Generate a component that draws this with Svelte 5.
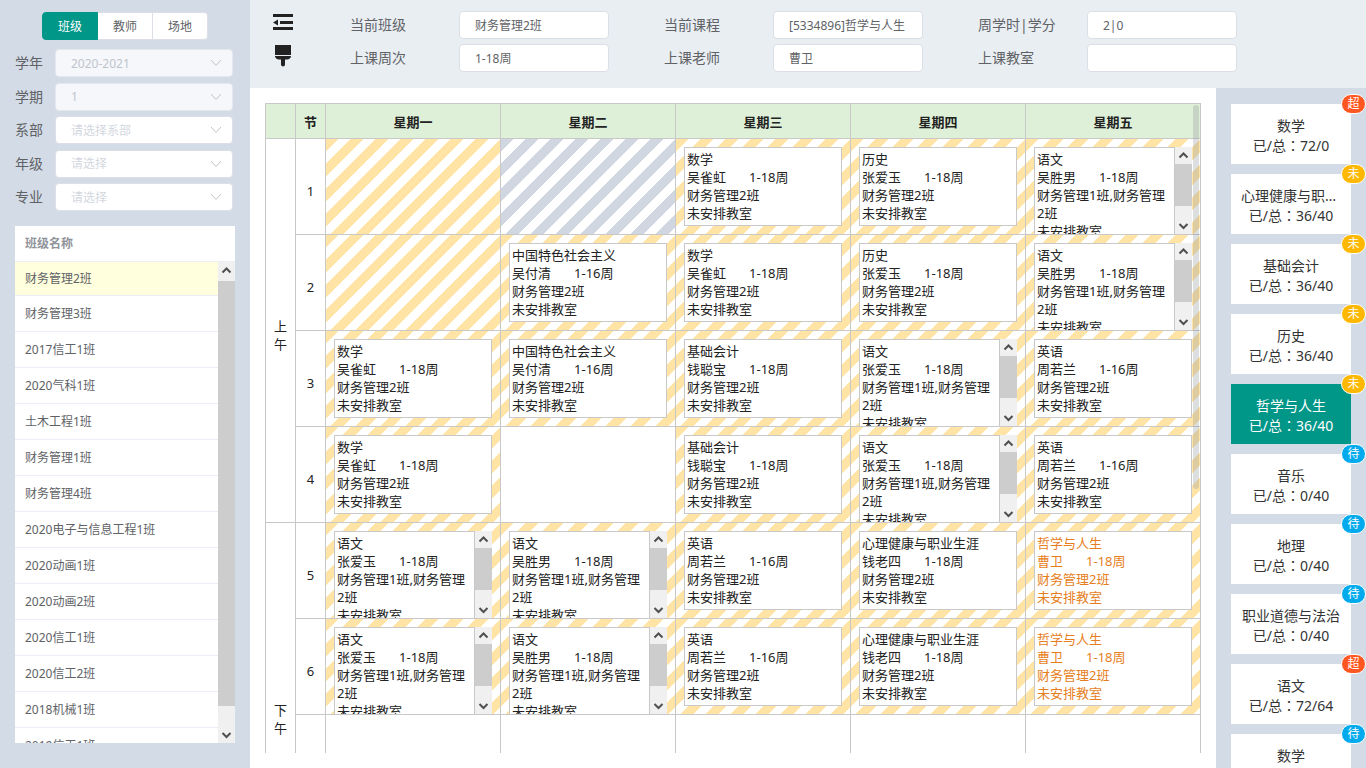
<script lang="ts">
	type Lesson = { course: string; teacher: string; weeks: string; classes: string };
	type Cell = { kind: 'blocked' | 'taken' | 'free' | 'lesson'; lesson?: Lesson; current?: boolean };

	const tabs = ['班级', '教师', '场地'];
	let tab = $state('班级');

	const filters = [
		{ id: 'year', label: '学年', text: '2020-2021', disabled: true },
		{ id: 'term', label: '学期', text: '1', disabled: true },
		{ id: 'dept', label: '系部', text: '请选择系部', disabled: false },
		{ id: 'grade', label: '年级', text: '请选择', disabled: false },
		{ id: 'major', label: '专业', text: '请选择', disabled: false }
	];

	const classNames = [
		'财务管理2班', '财务管理3班', '2017信工1班', '2020气科1班', '土木工程1班',
		'财务管理1班', '财务管理4班', '2020电子与信息工程1班', '2020动画1班', '2020动画2班',
		'2020信工1班', '2020信工2班', '2018机械1班', '2019信工1班'
	];
	let selectedClass = $state('财务管理2班');

	const info = [
		{ id: 'class', label: '当前班级', value: '财务管理2班' },
		{ id: 'course', label: '当前课程', value: '[5334896]哲学与人生' },
		{ id: 'hours', label: '周学时|学分', value: '2|0' },
		{ id: 'weeks', label: '上课周次', value: '1-18周' },
		{ id: 'teacher', label: '上课老师', value: '曹卫' },
		{ id: 'room', label: '上课教室', value: '' }
	];

	const days = ['星期一', '星期二', '星期三', '星期四', '星期五'];

	const one = '财务管理2班';
	const both = '财务管理1班,财务管理2班';
	function lesson(course: string, teacher: string, weeks = '1-18周', classes = one): Cell {
		return { kind: 'lesson', lesson: { course, teacher, weeks, classes }, current: course === '哲学与人生' };
	}
	const taken: Cell = { kind: 'taken' };
	const blocked: Cell = { kind: 'blocked' };
	const free: Cell = { kind: 'free' };
	const math = lesson('数学', '吴雀虹');
	const history = lesson('历史', '张爱玉');
	const socialism = lesson('中国特色社会主义', '吴付清', '1-16周');
	const accounting = lesson('基础会计', '钱聪宝');
	const english = lesson('英语', '周若兰', '1-16周');
	const mental = lesson('心理健康与职业生涯', '钱老四');
	const philosophy = lesson('哲学与人生', '曹卫');
	const chineseWu = lesson('语文', '吴胜男', '1-18周', both);
	const chineseZhang = lesson('语文', '张爱玉', '1-18周', both);

	const periods: Cell[][] = [
		[taken, blocked, math, history, chineseWu],
		[taken, socialism, math, history, chineseWu],
		[math, socialism, accounting, chineseZhang, english],
		[math, free, accounting, chineseZhang, english],
		[chineseZhang, chineseWu, english, mental, philosophy],
		[chineseZhang, chineseWu, english, mental, philosophy],
		[free, free, free, free, free],
		[free, free, free, free, free]
	];

	const courses = [
		{ name: '数学', hours: '72/0', state: '超' },
		{ name: '心理健康与职业生涯', hours: '36/40', state: '未' },
		{ name: '基础会计', hours: '36/40', state: '未' },
		{ name: '历史', hours: '36/40', state: '未' },
		{ name: '哲学与人生', hours: '36/40', state: '未' },
		{ name: '音乐', hours: '0/40', state: '待' },
		{ name: '地理', hours: '0/40', state: '待' },
		{ name: '职业道德与法治', hours: '0/40', state: '待' },
		{ name: '语文', hours: '72/64', state: '超' },
		{ name: '数学', hours: '0/40', state: '待' }
	];
	let activeCourse = $state(4);
</script>

{#snippet scrollbar(before: number, size: number)}
	<div class="bar" aria-hidden="true">
		<svg class="arrow" viewBox="0 0 17 17"><path d="M4.5 10.5 8.5 6.5 12.5 10.5" /></svg>
		<div class="track">
			<div class="thumb" style="margin-top: {before}px; height: {size}%"></div>
		</div>
		<svg class="arrow" viewBox="0 0 17 17"><path d="M4.5 7 8.5 11 12.5 7" /></svg>
	</div>
{/snippet}

<div class="page">
	<aside class="sidebar">
		<div class="tabs">
			{#each tabs as t}
				<label class:active={tab === t}>
					<input type="radio" name="tab" value={t} bind:group={tab} />
					{t}
				</label>
			{/each}
		</div>

		<div class="filters">
			{#each filters as f}
				<div class="filter">
					<label for={f.id}>{f.label}</label>
					<div class="select">
						<select id={f.id} disabled={f.disabled}>
							<option>{f.text}</option>
						</select>
						<svg viewBox="0 0 12 8"><path d="M1 1 6 6.5 11 1" /></svg>
					</div>
				</div>
			{/each}
		</div>

		<div class="class-list">
			<div class="list-title">班级名称</div>
			<div class="list-body">
				<div class="rows">
					{#each classNames as name}
						<button type="button" class:selected={selectedClass === name} onclick={() => (selectedClass = name)}>{name}</button>
					{/each}
				</div>
				{@render scrollbar(2, 95)}
			</div>
		</div>
	</aside>

	<div class="content">
		<header>
			<div class="tools">
				<button type="button" aria-label="收起">
					<svg viewBox="0 0 20 18">
						<path d="M0 1h20v3H0zM7 8h13v3H7zM0 14h20v3H0zM0 9.5 5 6.5v6z" />
					</svg>
				</button>
				<button type="button" aria-label="清除">
					<svg viewBox="0 0 20 22">
						<path d="M2 0h16v10H2zM2 11h16c0 2-2 3.500-4 3.500h-2v5c0 2.500-4 2.500-4 0v-5H6c-2 0-4-1.500-4-3.500z" />
					</svg>
				</button>
			</div>
			<div class="info">
				{#each info as i}
					<div class="field">
						<label for={i.id}>{i.label}</label>
						<input id={i.id} type="text" value={i.value} readonly />
					</div>
				{/each}
			</div>
		</header>

		<div class="body">
			<main>
				<div class="timetable">
					<table>
						<thead>
							<tr>
								<th class="narrow"></th>
								<th class="narrow">节</th>
								{#each days as day}
									<th>{day}</th>
								{/each}
							</tr>
						</thead>
						<tbody>
							{#each periods as row, i}
								<tr>
									{#if i % 4 === 0}
										<td class="half" rowspan="4">{i === 0 ? '上' : '下'}<br />午</td>
									{/if}
									<td class="period">{i + 1}</td>
									{#each row as cell}
										<td>
											<div class="cell {cell.kind}">
												{#if cell.lesson}
													{@const l = cell.lesson}
													<div class="lesson-box">
														<div class="card" class:current={cell.current}>
															<div>{l.course}</div>
															<div>{l.teacher}<span class="weeks">{l.weeks}</span></div>
															<div>{l.classes}</div>
															<div>未安排教室</div>
														</div>
														{#if l.classes === both}
															{@render scrollbar(0, 79)}
														{/if}
													</div>
												{/if}
											</div>
										</td>
									{/each}
								</tr>
							{/each}
						</tbody>
					</table>
					<div class="float-thumb"></div>
				</div>
			</main>

			<aside class="courses">
				{#each courses as c, i}
					<button type="button" class="course" class:active={activeCourse === i} onclick={() => (activeCourse = i)}>
						<span class="name">{c.name}</span>
						<span>已/总<span class="colon">：</span>{c.hours}</span>
						<span class="badge" class:over={c.state === '超'} class:todo={c.state === '待'}>{c.state}</span>
					</button>
				{/each}
			</aside>
		</div>
	</div>
</div>

<style>
	:global(body) {
		font-family: 'Noto Sans', 'Noto Sans CJK SC', sans-serif;
		font-size: 14px;
		color: #222;
	}
	.page, .page * {
		box-sizing: border-box;
	}
	button, input, select {
		font-family: inherit;
		margin: 0;
	}
	button {
		border: none;
		padding: 0;
		cursor: pointer;
	}
	.page {
		display: flex;
		height: 100vh;
		overflow: hidden;
	}

	/* left column */
	.sidebar {
		display: flex;
		flex-direction: column;
		flex: none;
		width: 250px;
		padding: 12px 15px 25px;
		background: #d3dce6;
		color: #606266;
	}
	.tabs {
		display: flex;
		align-self: center;
		font-size: 12px;
	}
	.tabs label {
		height: 28px;
		padding: 0 15px;
		border: 1px solid #dcdfe6;
		border-left: none;
		background: #fff;
		line-height: 28px;
		cursor: pointer;
	}
	.tabs label:first-child {
		border-left: 1px solid #dcdfe6;
		border-radius: 4px 0 0 4px;
	}
	.tabs label:last-child {
		border-radius: 0 4px 4px 0;
	}
	.tabs label.active {
		background: #009688;
		border-color: #009688;
		color: #fff;
	}
	.tabs input {
		position: absolute;
		opacity: 0;
		pointer-events: none;
	}
	.filters {
		display: flex;
		flex-direction: column;
		justify-content: space-between;
		flex: none;
		height: 162px;
		margin-top: 9px;
	}
	.filter {
		display: flex;
		align-items: center;
	}
	.filter label {
		width: 40px;
		line-height: 28px;
	}
	.select {
		display: grid;
		width: 178px;
	}
	.select select {
		grid-area: 1 / 1;
		height: 28px;
		padding: 0 15px;
		appearance: none;
		background: #fff;
		border: 1px solid #dcdfe6;
		border-radius: 4px;
		color: #d3d7de;
		font-size: 12px;
	}
	.select select:disabled {
		background: #f5f7fa;
		border-color: #e4e7ed;
		color: #c0c4cc;
		opacity: 1;
	}
	.select svg {
		grid-area: 1 / 1;
		place-self: center end;
		width: 12px;
		height: 8px;
		margin-right: 11px;
		fill: none;
		stroke: #c0c4cc;
		pointer-events: none;
	}
	.class-list {
		display: flex;
		flex-direction: column;
		flex: 1;
		min-height: 0;
		margin-top: 15px;
		background: #fff;
		font-size: 12px;
	}
	.list-title {
		flex: none;
		height: 36px;
		padding: 0 10px;
		border-bottom: 1px solid #ebeef5;
		color: #909399;
		font-weight: bold;
		line-height: 35px;
	}
	.list-body {
		display: flex;
		flex: 1;
		min-height: 0;
	}
	.rows {
		flex: 1;
		overflow: hidden;
	}
	.rows button {
		display: block;
		width: 100%;
		height: 36px;
		padding: 0 10px 2px;
		background: #fff;
		border-bottom: 1px solid #ebeef5;
		color: #606266;
		font-size: 12px;
		text-align: left;
	}
	.rows button:first-child {
		height: 34px;
	}
	.rows button.selected {
		background: #ffffdd;
	}

	/* scroll bars */
	.bar {
		display: flex;
		flex-direction: column;
		flex: none;
		width: 17px;
		background: #f0f0f0;
	}
	.arrow {
		flex: none;
		width: 17px;
		height: 17px;
		fill: none;
		stroke: #505050;
		stroke-width: 2;
	}
	.track {
		flex: 1;
		min-height: 0;
	}
	.thumb {
		background: #cdcdcd;
	}

	/* top */
	.content {
		display: flex;
		flex-direction: column;
		flex: 1;
		min-width: 0;
	}
	header {
		display: flex;
		flex: none;
		height: 88px;
		padding: 11px 74px 0 23px;
		background: #e9eef3;
		color: #606266;
	}
	.tools {
		display: flex;
		flex-direction: column;
		gap: 12px;
		flex: none;
		width: 77px;
		padding-top: 2px;
	}
	.tools button {
		display: flex;
		width: 22px;
		height: 20px;
		background: none;
	}
	.tools svg {
		width: 20px;
		height: 22px;
		fill: #222;
	}
	.tools button:first-child svg {
		height: 18px;
	}
	.info {
		display: grid;
		grid-template-columns: repeat(3, 1fr);
		grid-auto-rows: 28px;
		row-gap: 5px;
		flex: 1;
	}
	.field {
		display: flex;
		align-items: center;
	}
	.field label {
		width: 109px;
		line-height: 28px;
	}
	.field input {
		width: 150px;
		height: 28px;
		padding: 0 15px;
		background: #fff;
		border: 1px solid #dcdfe6;
		border-radius: 4px;
		color: #606266;
		font-size: 12px;
	}

	/* timetable */
	.body {
		display: flex;
		flex: 1;
		min-height: 0;
	}
	main {
		display: flex;
		flex: 1;
		min-width: 0;
		padding: 15px;
		background: #fff;
	}
	.timetable {
		position: relative;
		flex: 1;
		overflow: hidden;
		font-size: 13px;
		line-height: 18px;
	}
	table {
		width: 100%;
		table-layout: fixed;
		border-collapse: collapse;
	}
	th, td {
		padding: 0;
		border: 1px solid #c8c8c8;
	}
	th {
		height: 35px;
		padding-top: 2px;
		background: #dff0d8;
	}
	.narrow {
		width: 30px;
	}
	.half, .period {
		padding-top: 8px;
		text-align: center;
	}
	.cell {
		height: 95px;
		padding: 8px 8px 0;
	}
	.taken, .lesson, .blocked {
		--stripe: #ffe4a6;
		background-image: linear-gradient(135deg, var(--stripe) 25%, transparent 25%, transparent 50%, var(--stripe) 50%, var(--stripe) 75%, transparent 75%);
		background-size: 25px 25px;
	}
	.blocked {
		--stripe: #d1d7e0;
	}
	.lesson-box {
		display: flex;
		align-items: flex-start;
		height: 87px;
		overflow: hidden;
	}
	.card {
		flex: 1;
		min-width: 0;
		padding: 2px 2px 3px;
		background: #fff;
		border: 1px solid #c8c8c8;
	}
	.card.current {
		color: #e67e22;
	}
	.lesson-box .bar {
		align-self: stretch;
	}
	.weeks {
		margin-left: 23px;
	}
	.float-thumb {
		position: absolute;
		top: 2px;
		right: 2px;
		width: 6px;
		height: 59%;
		border-radius: 4px;
		background: rgba(144, 147, 153, 0.3);
	}

	/* course cards */
	.courses {
		flex: none;
		width: 150px;
		padding: 16px 15px 0;
		overflow: hidden;
		background: #d3dce6;
	}
	.course {
		position: relative;
		display: flex;
		flex-direction: column;
		align-items: center;
		width: 100%;
		height: 60px;
		margin-bottom: 10px;
		padding: 12px 10px 0;
		background: #fff;
		color: #333;
		font-size: 14px;
		line-height: 20px;
	}
	.course.active {
		background: #009688;
		color: #fff;
	}
	.name {
		max-width: 100%;
		overflow: hidden;
		text-overflow: ellipsis;
		white-space: nowrap;
	}
	.colon {
		font-family: 'Noto Sans CJK TC', sans-serif;
		line-height: 1;
	}
	.badge {
		position: absolute;
		top: -10px;
		right: -15px;
		width: 25px;
		height: 20px;
		border: 1px solid #fff;
		border-radius: 10px;
		background: #ffb800;
		color: #fff;
		font-size: 12px;
		line-height: 18px;
	}
	.badge.over {
		background: #ff5722;
	}
	.badge.todo {
		background: #01aaed;
	}
</style>
